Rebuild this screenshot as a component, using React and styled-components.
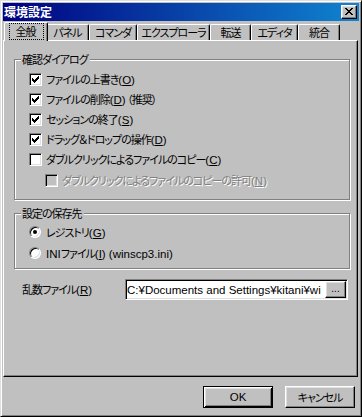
import React from "react";
import styled, { createGlobalStyle, css } from "styled-components";

const GlobalStyle = createGlobalStyle`
  html, body {
    margin: 0;
    padding: 0;
    background: #c0c0c0;
  }
  body {
    font-family: "Liberation Sans", "Noto Sans CJK JP", sans-serif;
    font-size: 11.5px;
    line-height: 12px;
    color: #000;
    font-feature-settings: "palt";
  }
`;

// classic 3d edges
const raised = css`
  border: 1px solid;
  border-color: #fff #000 #000 #fff;
  box-shadow: inset -1px -1px 0 #808080, inset 1px 1px 0 #dfdfdf;
`;
const sunken = css`
  border: 1px solid;
  border-color: #808080 #fff #fff #808080;
  box-shadow: inset 1px 1px 0 #000, inset -1px -1px 0 #dfdfdf;
`;

// japanese runs are narrower in the bitmap UI font
const Jp = styled.span`
  font-family: "Noto Sans CJK JP", sans-serif;
  font-size: 11px;
  letter-spacing: -1px;
`;

const Window = styled.div`
  width: 362px;
  height: 417px;
  box-sizing: border-box;
  border: 1px solid;
  border-color: #dfdfdf #000 #000 #dfdfdf;
  box-shadow: inset 1px 1px 0 #fff, inset -1px -1px 0 #808080;
  padding: 2px;
  background: #c0c0c0;
  display: flex;
  flex-direction: column;
`;

const TitleBar = styled.div`
  flex: none;
  height: 18px;
  background: linear-gradient(to right, #000080, #1084d0);
  display: flex;
  align-items: center;
  justify-content: space-between;
  padding: 0 2px 0 1px;
`;

const Title = styled.span`
  color: #fff;
  font-family: "Noto Sans CJK JP", sans-serif;
  font-weight: bold;
  font-size: 12px;
  line-height: 12px;
`;

const CloseButton = styled.div`
  width: 16px;
  height: 14px;
  box-sizing: border-box;
  ${raised};
  background: #c0c0c0;
  svg {
    display: block;
  }
`;

const Client = styled.div`
  flex: 1;
  display: flex;
  flex-direction: column;
  padding-top: 1px;
`;

const TabStrip = styled.div`
  display: flex;
  align-items: flex-end;
  height: 18px;
  padding-left: 3px;
  position: relative;
  z-index: 1;
`;

const Tab = styled.div`
  box-sizing: border-box;
  width: ${(p) => p.$w}px;
  height: 16px;
  border: 1px solid #fff;
  border-bottom: none;
  border-right-color: #000;
  border-radius: 2px 2px 0 0;
  box-shadow: inset -1px 0 0 #808080;
  background: #c0c0c0;
  display: flex;
  align-items: center;
  justify-content: center;
  white-space: nowrap;
  padding-bottom: 1px;
  position: relative;
  ${(p) =>
    p.$active &&
    css`
      width: ${p.$w + 4}px;
      height: 19px;
      margin: 0 -2px -1px;
      z-index: 2;
      padding-bottom: 2px;
    `}
`;

const Focus = styled.span`
  padding: 1px 7px 1px 6px;
  outline: 1px dotted #000;
  line-height: 12px;
`;

const Panel = styled.div`
  flex: none;
  height: 337px;
  box-sizing: border-box;
  margin-right: 1px;
  border: 1px solid;
  border-color: #fff #000 #000 #fff;
  box-shadow: inset -1px -1px 0 #808080;
  padding: 0 7px 0 10px;
  display: flex;
  flex-direction: column;
`;

const Group = styled.div`
  margin-top: ${(p) => p.$mt}px;
  border: 1px solid #808080;
  box-shadow: inset 1px 1px 0 #fff, 1px 1px 0 #fff;
  padding: 0 0 ${(p) => p.$pb}px 14px;
`;

const Caption = styled.div`
  width: fit-content;
  height: 12px;
  margin: -7px 0 0 -8px;
  padding: 0 2px 0 1px;
  background: #c0c0c0;
`;

const Row = styled.div`
  display: flex;
  align-items: center;
  gap: 4px;
  height: 20px;
  margin-top: ${(p) => p.$mt || 0}px;
  padding-left: ${(p) => p.$indent || 0}px;
  color: ${(p) => (p.$disabled ? "#808080" : "#000")};
  text-shadow: ${(p) => (p.$disabled ? "1px 1px 0 #fff" : "none")};
  white-space: nowrap;
`;

const Box = styled.span`
  flex: none;
  width: 13px;
  height: 13px;
  box-sizing: border-box;
  ${sunken};
  background: ${(p) => (p.$disabled ? "#c0c0c0" : "#fff")};
  svg {
    display: block;
  }
`;

const Radio = styled.span`
  flex: none;
  width: 12px;
  height: 12px;
  box-sizing: border-box;
  border-radius: 50%;
  ${sunken};
  background: #fff;
  display: flex;
  align-items: center;
  justify-content: center;
  margin-right: 1px;
  &::after {
    content: "";
    width: 4px;
    height: 4px;
    border-radius: 50%;
    background: ${(p) => (p.$on ? "#000" : "transparent")};
  }
`;

const FileRow = styled.div`
  display: flex;
  align-items: center;
  margin-top: 10px;
  padding-left: 8px;
`;

const FileLabel = styled.span`
  width: 103px;
  flex: none;
`;

const Edit = styled.div`
  width: 223px;
  height: 21px;
  box-sizing: border-box;
  ${sunken};
  background: #fff;
  padding: 1px;
  display: flex;
  align-items: stretch;
`;

const EditText = styled.span`
  flex: 1;
  min-width: 0;
  overflow: hidden;
  white-space: nowrap;
  display: flex;
  align-items: center;
  padding-top: 1px;
`;

const Browse = styled.span`
  flex: none;
  width: 21px;
  box-sizing: border-box;
  ${raised};
  background: #c0c0c0;
  display: flex;
  align-items: center;
  justify-content: center;
  font-size: 10px;
  padding-bottom: 2px;
`;

const Buttons = styled.div`
  display: flex;
  justify-content: flex-end;
  gap: 12px;
  margin-top: 9px;
  padding-right: 4px;
`;

const Button = styled.div`
  width: 70px;
  height: 22px;
  box-sizing: border-box;
  background: #c0c0c0;
  display: flex;
  align-items: center;
  justify-content: center;
  ${(p) =>
    p.$default
      ? css`
          border: 1px solid #000;
          box-shadow: inset 1px 1px 0 #fff, inset -1px -1px 0 #000,
            inset 2px 2px 0 #dfdfdf, inset -2px -2px 0 #808080;
        `
      : raised};
`;

const CloseGlyph = () => (
  <svg width="14" height="12" viewBox="0 0 14 12" shapeRendering="crispEdges">
    <path
      fill="#000"
      d="M3 2h2v1H3zM9 2h2v1H9zM4 3h2v1H4zM8 3h2v1H8zM5 4h4v1H5zM6 5h2v1H6zM5 6h4v1H5zM4 7h2v1H4zM8 7h2v1H8zM3 8h2v1H3zM9 8h2v1H9z"
    />
  </svg>
);

const checkPath = [
  [2, 4],
  [3, 5],
  [4, 6],
  [5, 5],
  [6, 4],
  [7, 3],
  [8, 2],
]
  .map(([x, y]) => `M${x} ${y}h1v3h-1z`)
  .join("");

const Check = ({ on, disabled }) => (
  <Box $disabled={disabled}>
    {on && (
      <svg width="11" height="11" viewBox="0 0 11 11" shapeRendering="crispEdges">
        <path fill="#000" d={checkPath} />
      </svg>
    )}
  </Box>
);

// label with an underlined access key
const Label = ({ text, k, tail }) => (
  <span>
    <Jp>{text}</Jp>(<u>{k}</u>){tail}
  </span>
);

const tabs = [
  ["全般", 40],
  ["パネル", 43],
  ["コマンダ", 48],
  ["エクスプローラ", 73],
  ["転送", 41],
  ["エディタ", 47],
  ["統合", 42],
];

export default function App() {
  return (
    <>
      <GlobalStyle />
      <Window>
        <TitleBar>
          <Title>環境設定</Title>
          <CloseButton>
            <CloseGlyph />
          </CloseButton>
        </TitleBar>
        <Client>
          <TabStrip>
            {tabs.map(([label, w], i) => (
              <Tab key={label} $w={w} $active={i === 0}>
                {i === 0 ? (
                  <Focus>
                    <Jp>{label}</Jp>
                  </Focus>
                ) : (
                  <Jp>{label}</Jp>
                )}
              </Tab>
            ))}
          </TabStrip>
          <Panel>
            <Group $mt={18} $pb={9}>
              <Caption>
                <Jp>確認ダイアログ</Jp>
              </Caption>
              <Row $mt={4}>
                <Check on />
                <Label text="ファイルの上書き" k="O" />
              </Row>
              <Row>
                <Check on />
                <Label text="ファイルの削除" k="D" tail={<Jp> （推奨）</Jp>} />
              </Row>
              <Row>
                <Check on />
                <Label text="セッションの終了" k="S" />
              </Row>
              <Row>
                <Check on />
                <Label text="ドラッグ＆ドロップの操作" k="D" />
              </Row>
              <Row>
                <Check />
                <Label text="ダブルクリックによるファイルのコピー" k="C" />
              </Row>
              <Row $mt={1} $indent={16} $disabled>
                <Check disabled />
                <Label text="ダブルクリックによるファイルのコピーの許可" k="N" />
              </Row>
            </Group>
            <Group $mt={13} $pb={5}>
              <Caption>
                <Jp>設定の保存先</Jp>
              </Caption>
              <Row $mt={3}>
                <Radio $on />
                <Label text="レジストリ" k="G" />
              </Row>
              <Row $mt={1}>
                <Radio />
                <span>
                  INI<Jp>ファイル</Jp>(<u>I</u>) (winscp3.ini)
                </span>
              </Row>
            </Group>
            <FileRow>
              <FileLabel>
                <Label text="乱数ファイル" k="R" />
              </FileLabel>
              <Edit>
                <EditText>C:¥Documents and Settings¥kitani¥wi</EditText>
                <Browse>...</Browse>
              </Edit>
            </FileRow>
          </Panel>
          <Buttons>
            <Button $default>OK</Button>
            <Button>
              <Jp>キャンセル</Jp>
            </Button>
          </Buttons>
        </Client>
      </Window>
    </>
  );
}
